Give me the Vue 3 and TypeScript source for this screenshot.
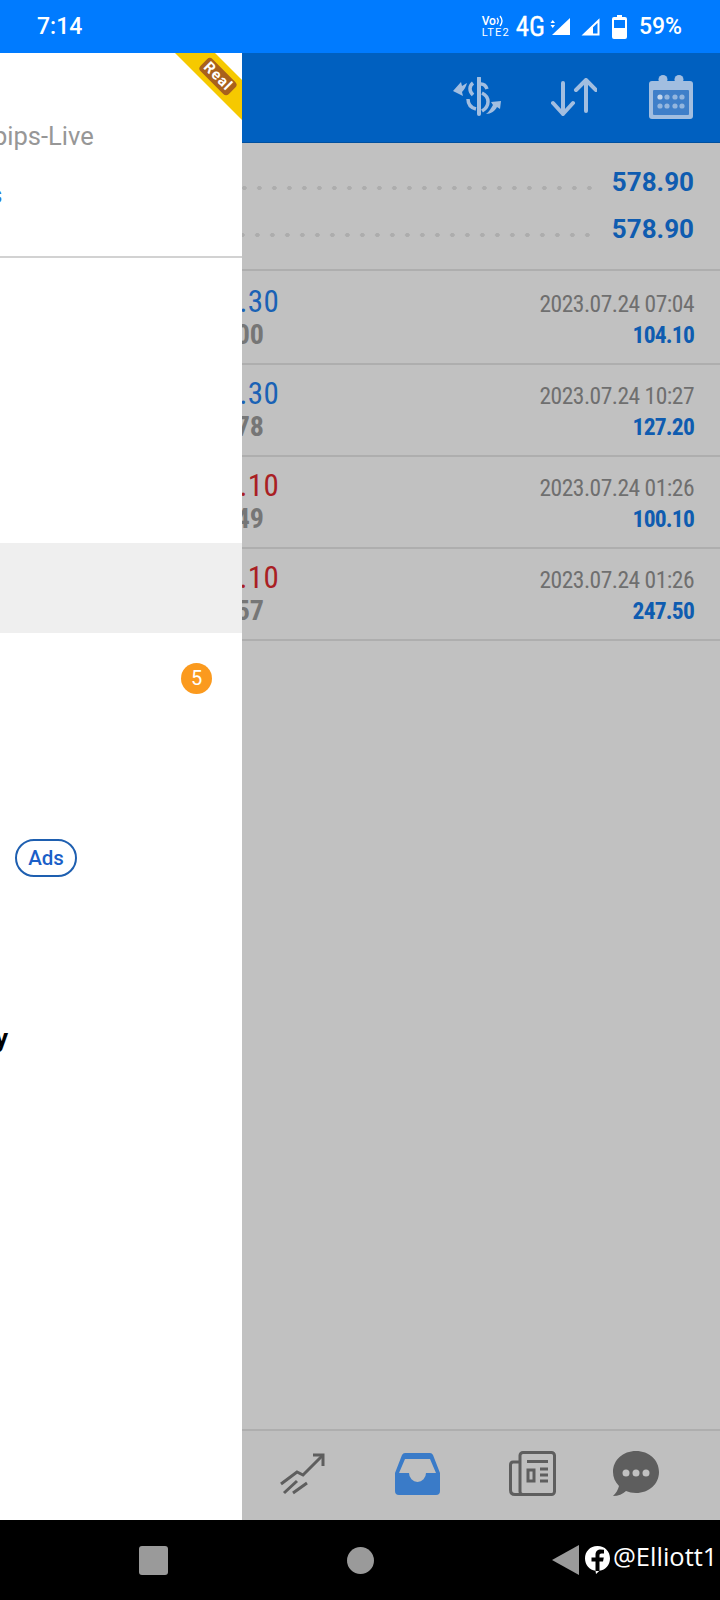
<script setup lang="ts">
interface Deal {
  volume: string
  price: string
  date: string
  profit: string
  sell?: boolean
}

const deals: Deal[] = [
  { volume: '0.30', price: '1.2800', date: '2023.07.24 07:04', profit: '104.10' },
  { volume: '0.30', price: '1.2778', date: '2023.07.24 10:27', profit: '127.20' },
  { volume: '1.10', price: '1.2849', date: '2023.07.24 01:26', profit: '100.10', sell: true },
  { volume: '1.10', price: '1.2857', date: '2023.07.24 01:26', profit: '247.50', sell: true }
]

const menu = [
  { id: 1 },
  { id: 2 },
  { id: 3 },
  { id: 4, active: true },
  { id: 5, badge: '5' },
  { id: 6 },
  { id: 7, ads: true },
  { id: 8 },
  { id: 9, tail: 'y' }
]
</script>

<template>
  <div class="screen">
    <div class="status">
      <span class="time">7:14</span>
      <div class="status-right">
        <span class="volte">
          <span class="vo">Vo<svg width="9" height="12" viewBox="0 0 9 12" fill="none" stroke="#fff" stroke-width="1.300"><path d="M1 3 Q3.500 6 1 9" /><path d="M4 1 Q8 6 4 11" /></svg></span>
          <span class="lte">LTE2</span>
        </span>
        <span class="net">4G</span>
        <svg class="sig1" width="21" height="18" viewBox="0 0 21 18">
          <path d="M0.500 5 H5 L2.750 2Z M0.500 7 H5 L2.750 10Z" fill="#fff" />
          <path d="M20 0 V17 H2Z" fill="#fff" />
        </svg>
        <svg class="sig2" width="19" height="18" viewBox="0 0 19 18">
          <path d="M17.500 2.500 V16.500 H3Z" fill="none" stroke="#fff" stroke-width="2" />
          <path d="M12 7 V17 H2Z" fill="#fff" />
        </svg>
        <svg class="batt" width="15" height="24" viewBox="0 0 15 24">
          <path d="M5 0 H10 V2 H13 Q15 2 15 4 V22 Q15 24 13 24 H2 Q0 24 0 22 V4 Q0 2 2 2 H5Z" fill="#fff" />
          <rect x="2" y="5" width="11" height="8" fill="#007bff" />
        </svg>
        <span class="pct">59%</span>
      </div>
    </div>

    <div class="toolbar">
      <svg class="tool-swap" width="49" height="40" viewBox="0 0 49 40" fill="none" stroke="#a2bee0" stroke-width="3.500">
        <path d="M26 1 V37" stroke-width="4" stroke-linecap="round" />
        <path d="M28 7 C31 7 33 9 34 12" />
        <path d="M20 6 C16 9 16 14 20 18" />
        <path d="M15 22 C15 28 19 31 23 32" />
        <path d="M29 16 C37 20 37 29 29 34" />
        <path d="M0 14 L8 5 L9 9 C11 8 12 7 14 6 C13 10 11 13 9 15 L10 19Z" fill="#a2bee0" stroke="none" />
        <path d="M48 24 L38 25 L40 28 C38 31 36 35 33 37 C38 37 42 34 44 30 L47 32Z" fill="#a2bee0" stroke="none" />
      </svg>
      <svg class="tool-sort" width="46" height="38" viewBox="0 0 46 38" fill="none" stroke="#a2bee0" stroke-width="4" stroke-linecap="round" stroke-linejoin="round">
        <path d="M12 5 V36 M2 25 L12 36 L22 25" />
        <path d="M35 2 V33 M25 12 L35 2 L45 12" />
      </svg>
      <svg class="tool-cal" width="44" height="44" viewBox="0 0 44 44">
        <rect x="0" y="6" width="44" height="38" rx="3" fill="#a2bee0" />
        <circle cx="14" cy="4.500" r="4.500" fill="#a2bee0" />
        <circle cx="30" cy="4.500" r="4.500" fill="#a2bee0" />
        <rect x="4" y="15" width="36" height="25" rx="1" fill="#3f7fc9" />
        <circle v-for="x in [11, 18, 26, 33]" :key="'a' + x" :cx="x" cy="22" r="2.600" :fill="x === 11 ? '#c4d6ec' : '#94b6de'" />
        <circle v-for="x in [11, 18, 26, 33]" :key="'b' + x" :cx="x" cy="31" r="2.600" fill="#94b6de" />
      </svg>
    </div>

    <div class="summary">
      <div class="sum-row">
        <div class="leader"></div>
        <span class="sum-val">578.90</span>
      </div>
      <div class="sum-row">
        <div class="leader"></div>
        <span class="sum-val">578.90</span>
      </div>
    </div>

    <div v-for="d in deals" :key="d.price" class="deal">
      <div class="deal-left">
        <span class="vol" :class="{ sell: d.sell }">{{ d.volume }}</span>
        <span class="price">{{ d.price }}</span>
      </div>
      <div class="deal-right">
        <span class="date">{{ d.date }}</span>
        <span class="profit">{{ d.profit }}</span>
      </div>
    </div>

    <div class="spacer"></div>

    <div class="tabs">
      <svg class="tab-chart" width="45" height="42" viewBox="0 0 45 42" fill="none" stroke="#5e5e5e" stroke-width="3">
        <path d="M1 31 L17 19 L23 22 L43 2" />
        <path d="M33 2 H43 V13" />
        <path d="M4 40 L17 28 M13 40 L27 30" />
      </svg>
      <svg class="tab-inbox" width="45" height="42" viewBox="0 0 45 42">
        <path fill="#3a7bc8" fill-rule="evenodd" d="M10 0 H35 Q37 0 38 2 L45 20 V38 Q45 42 41 42 H4 Q0 42 0 38 V20 L7 2 Q8 0 10 0Z M10 6 H35 L41 20 H31 A8.500 9 0 0 1 14 20 H4Z" />
      </svg>
      <svg class="tab-news" width="47" height="45" viewBox="0 0 47 45" fill="none" stroke="#5e5e5e" stroke-width="3">
        <rect x="11" y="1.500" width="34.500" height="42" rx="3" />
        <path d="M11 11 H4 Q1.500 11 1.500 14 V39 Q1.500 43.500 6 43.500 H14" />
        <path d="M18 10.500 H39" />
        <rect x="19" y="19" width="6" height="11" />
        <path d="M31 18 H39 M31 24 H39 M31 30 H39" />
      </svg>
      <svg class="tab-chat" width="46" height="46" viewBox="0 0 46 46">
        <path fill="#5e5e5e" d="M23 0 C36 0 46 9 46 21 C46 33 36 42 23 42 C19 42 16 41 13 40 C10 43 5 45 0 45 C3 42 5 39 6 35 C2 31 0 26 0 21 C0 9 10 0 23 0Z" />
        <circle cx="13" cy="22" r="3.500" fill="#c1c1c1" />
        <circle cx="23" cy="22" r="3.500" fill="#c1c1c1" />
        <circle cx="33" cy="22" r="3.500" fill="#c1c1c1" />
      </svg>
    </div>

    <div class="navbar">
      <span class="nav-square"></span>
      <span class="nav-circle"></span>
      <svg class="nav-back" width="27" height="30" viewBox="0 0 27 30">
        <path d="M0 15 L27 0 V30Z" fill="#9a9a9a" />
      </svg>
      <span class="credit">
        <svg class="fb" width="25" height="28" viewBox="0 0 25 28">
          <path fill="#fff" d="M12.500 0 C20 0 25 5.500 25 12.500 C25 19 20.500 24 14.500 24.800 L11 28 L10.500 24.800 C4.500 24 0 19 0 12.500 C0 5.500 5 0 12.500 0Z" />
          <path fill="#000" d="M10.500 25 V15.500 H6.500 V11.500 H10.500 V9 C10.500 5 12.800 3.500 15.500 3.500 L19 3.700 V7.500 H16.500 C15 7.500 14.500 8.200 14.500 9.500 V11.500 H18.800 L18 15.500 H14.500 V25Z" />
        </svg>
        <span class="handle">@Elliott1</span>
      </span>
    </div>

    <aside class="drawer">
      <div class="drawer-head">
        <div class="account">pips-Live</div>
        <div class="link">s</div>
      </div>
      <div class="menu">
        <div v-for="m in menu" :key="m.id" class="menu-item" :class="{ active: m.active }">
          <span v-if="m.ads" class="ads">Ads</span>
          <span v-if="m.badge" class="badge">{{ m.badge }}</span>
          <span v-if="m.tail" class="tail">{{ m.tail }}</span>
        </div>
      </div>
      <div class="ribbon"><span>Real</span></div>
    </aside>
  </div>
</template>

<style scoped>
.screen {
  position: relative;
  width: 720px;
  height: 1600px;
  display: flex;
  flex-direction: column;
  overflow: hidden;
  background: #c1c1c1;
  font-family: Roboto, "Liberation Sans", sans-serif;
}

.status {
  height: 53px;
  flex: none;
  background: #007bff;
  color: #fff;
  display: flex;
  align-items: center;
  justify-content: space-between;
  padding: 0 38px 0 37px;
  box-sizing: border-box;
}

.time {
  font-size: 23px;
  font-weight: 500;
}

.status-right {
  display: flex;
  align-items: center;
}

.volte {
  display: flex;
  flex-direction: column;
  width: 27px;
  margin-right: 7px;
  font-weight: 500;
}

.vo {
  display: flex;
  align-items: center;
  font-size: 12px;
  line-height: 11px;
}

.lte {
  font-size: 11px;
  line-height: 11px;
  letter-spacing: 1.200px;
  font-weight: 400;
}

.net {
  font-size: 27px;
  font-weight: 400;
  font-stretch: 75%;
  -webkit-text-stroke: 0.3px #fff;
  margin-right: 5px;
}

.sig1 {
  margin-right: 10px;
}

.sig2 {
  margin-right: 12px;
}

.batt {
  margin-right: 12px;
}

.pct {
  font-size: 23px;
  font-weight: 500;
}

.toolbar {
  height: 90px;
  flex: none;
  background: #0060c0;
  border-bottom: 1px solid #00509f;
  box-sizing: border-box;
  display: flex;
  justify-content: flex-end;
  align-items: flex-start;
  padding-right: 27px;
}

.tool-swap {
  margin-top: 24px;
  margin-right: 49px;
}

.tool-sort {
  margin-top: 25px;
  margin-right: 52px;
}

.tool-cal {
  margin-top: 22px;
}

.summary {
  height: 128px;
  flex: none;
  box-sizing: border-box;
  padding: 15px 26px 0 0;
  border-bottom: 2px solid #aeaeae;
}

.sum-row {
  height: 47px;
  display: flex;
  align-items: center;
}

.leader {
  flex: 1;
  height: 4px;
  margin-top: 12px;
  margin-right: 15px;
  background: radial-gradient(circle at center, #adadad 2px, transparent 2.500px) right center / 15px 4px repeat-x;
}

.sum-row:nth-child(2) .leader {
  margin-right: 17px;
}

.sum-val {
  font-size: 26px;
  font-weight: 700;
  color: #0f5cb0;
}

.deal {
  height: 92px;
  flex: none;
  box-sizing: border-box;
  border-bottom: 2px solid #aeaeae;
  display: flex;
  justify-content: space-between;
  padding-top: 11px;
  padding-right: 26px;
}

.summary + .deal {
  height: 94px;
  padding-top: 13px;
}

.deal-left {
  width: 279px;
  display: flex;
  flex-direction: column;
  align-items: flex-end;
}

.vol {
  font-size: 31px;
  line-height: 36px;
  letter-spacing: 0.300px;
  color: #1a62b5;
  font-stretch: 75%;
}

.vol.sell {
  color: #a91f24;
}

.price {
  font-size: 28px;
  line-height: 29px;
  font-weight: 700;
  color: #767676;
  font-stretch: 75%;
  margin-right: 15px;
}

.deal-right {
  display: flex;
  flex-direction: column;
  align-items: flex-end;
  padding-top: 5px;
}

.date {
  font-size: 23.500px;
  line-height: 30px;
  letter-spacing: -0.500px;
  color: #6f6f6f;
  font-stretch: 75%;
}

.profit {
  font-size: 23.500px;
  line-height: 33px;
  letter-spacing: -0.800px;
  font-weight: 700;
  color: #0f5cb0;
  font-stretch: 75%;
}

.spacer {
  flex: 1;
}

.tabs {
  height: 91px;
  flex: none;
  box-sizing: border-box;
  border-top: 2px solid #aeaeae;
  background: #bfbfbf;
  display: flex;
  align-items: flex-start;
  padding-left: 280px;
}

.tab-chart {
  margin-top: 22px;
  margin-right: 70px;
}

.tab-inbox {
  margin-top: 22px;
  margin-right: 69px;
}

.tab-news {
  margin-top: 20px;
  margin-right: 57px;
}

.tab-chat {
  margin-top: 20px;
}

.navbar {
  height: 80px;
  flex: none;
  background: #000;
  display: flex;
  align-items: center;
  padding-left: 139px;
}

.nav-square {
  width: 29px;
  height: 29px;
  border-radius: 3px;
  background: #9a9a9a;
  margin-right: 179px;
}

.nav-circle {
  width: 27px;
  height: 27px;
  border-radius: 50%;
  background: #9a9a9a;
  margin-right: 178px;
}

.nav-back {
  margin-right: 6px;
}

.credit {
  display: flex;
  align-items: center;
  color: #fff;
}

.fb {
  margin-right: 3px;
}

.handle {
  font-family: "Open Sans", sans-serif;
  font-size: 25.500px;
  font-weight: 400;
  margin-bottom: 8px;
  white-space: nowrap;
}

.drawer {
  position: absolute;
  left: 0;
  top: 53px;
  width: 242px;
  height: 1467px;
  background: #fff;
  overflow: hidden;
}

.drawer-head {
  height: 205px;
  box-sizing: border-box;
  border-bottom: 2px solid #d2d2d2;
  padding-top: 65px;
}

.account {
  font-size: 25.500px;
  line-height: 36px;
  color: #979797;
  margin-left: -7px;
  white-space: nowrap;
}

.link {
  font-size: 24px;
  line-height: 30px;
  color: #2a7ad2;
  margin-top: 26px;
  margin-left: -10px;
}

.menu {
  padding-top: 15px;
}

.menu-item {
  height: 90px;
  display: flex;
  align-items: center;
}

.menu-item.active {
  background: #efefef;
}

.ads {
  margin-left: 15px;
  width: 62px;
  height: 38px;
  box-sizing: border-box;
  border: 2px solid #1e5fb0;
  border-radius: 19px;
  display: flex;
  align-items: center;
  justify-content: center;
  color: #1a5fc8;
  font-size: 20.500px;
  font-weight: 500;
}

.badge {
  margin-left: auto;
  margin-right: 30px;
  width: 31px;
  height: 31px;
  border-radius: 50%;
  background: #fb9a1e;
  color: #fff;
  font-size: 20px;
  display: flex;
  align-items: center;
  justify-content: center;
}

.tail {
  font-size: 26px;
  font-weight: 700;
  color: #000;
  margin-left: -5px;
}

.ribbon {
  position: absolute;
  top: 0;
  right: 0;
  width: 67px;
  height: 67px;
  background: #f6c900;
  clip-path: polygon(0 0, 40px 0, 100% 27px, 100% 100%);
}

.ribbon span {
  position: absolute;
  left: 23px;
  top: 15px;
  padding: 0 3px;
  background: #a8611c;
  color: #fff;
  border-radius: 4px;
  font-size: 15px;
  line-height: 17px;
  font-weight: 700;
  letter-spacing: 1px;
  transform: rotate(45deg);
}
</style>
